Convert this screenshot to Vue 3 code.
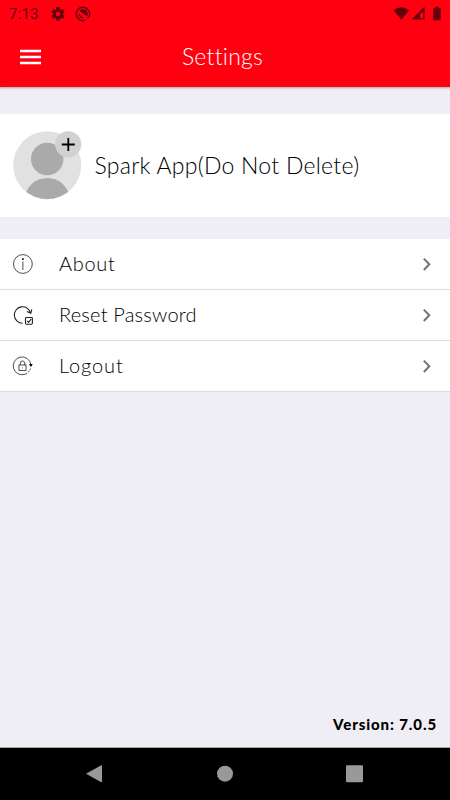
<template>
  <div class="screen">
    <header class="top">
      <div class="status">
        <span class="time">7:13</span>
        <svg class="gear" viewBox="0 0 24 24">
          <path d="M19.400 13c.1-.3.1-.7.1-1s0-.7-.1-1l2.100-1.700c.2-.1.2-.4.1-.6l-2-3.500c-.1-.2-.4-.3-.6-.2l-2.500 1c-.5-.4-1.100-.7-1.700-1L14.500 2.400c0-.2-.3-.4-.5-.4h-4c-.2 0-.5.2-.5.4L9.100 5c-.6.3-1.200.6-1.700 1L5 5c-.2-.1-.5 0-.6.2l-2 3.500c-.1.2-.1.5.1.6L4.600 11c0 .3-.1.7-.1 1s0 .7.1 1l-2.100 1.700c-.2.1-.2.4-.1.6l2 3.500c.1.2.4.3.6.2l2.500-1c.5.4 1.100.7 1.700 1l.4 2.600c0 .2.2.4.5.4h4c.2 0 .5-.2.5-.4l.4-2.600c.6-.3 1.200-.6 1.700-1l2.500 1c.2.1.5 0 .6-.2l2-3.500c.1-.2.1-.5-.1-.6zM12 15.500a3.500 3.500 0 1 1 0-7 3.500 3.500 0 0 1 0 7z" />
        </svg>
        <svg class="sync" viewBox="0 0 16 16">
          <path class="ring" d="M10.500 14.200A6.700 6.700 0 1 1 14.400 9.800L12.500 12.300" />
          <path d="M4.600 5A4.500 4.500 0 0 1 11.900 10.300z" />
          <path d="M3.500 7.600 8.700 12.300A4.400 4.400 0 0 1 3.500 7.600z" />
        </svg>
        <svg class="signals" viewBox="0 0 50 16">
          <path d="M1.500 4.200Q9.300-1.800 17.200 4.200L9.300 13.700z" />
          <path fill-rule="evenodd" d="M32.500 .5V13.500H19.500zM31.200 5 28 8.200v4h3.200z" />
          <path d="M41.200 2.300h2V.8h3.500v1.500h2v11.900h-7.500z" />
        </svg>
      </div>
      <div class="bar">
        <svg class="menu" viewBox="0 0 22 16">
          <path d="M0 2h21M0 8h21M0 14h21" />
        </svg>
        <h1>Settings</h1>
      </div>
    </header>

    <section class="profile">
      <svg class="avatar" viewBox="0 0 69 69">
        <defs>
          <clipPath id="face"><circle cx="34.200" cy="34.200" r="34" /></clipPath>
        </defs>
        <circle cx="34.200" cy="34.200" r="34" fill="#e1e1e1" />
        <g clip-path="url(#face)" fill="#aaa">
          <circle cx="34.200" cy="28" r="16.200" />
          <circle cx="34.200" cy="69.500" r="22.600" />
        </g>
        <circle cx="55.200" cy="13.300" r="13.100" fill="#d1d1d1" />
        <path d="M48.800 13.500h13M55.300 7v13" stroke="#000" stroke-width="1.800" />
      </svg>
      <span class="name">Spark App(Do Not Delete)</span>
    </section>

    <ul class="list">
      <li v-for="item in items" :key="item.icon" :class="item.icon">
        <svg v-if="item.icon === 'about'" class="icon" viewBox="0 0 22 22">
          <circle cx="10.900" cy="11" r="9.400" />
          <path d="M10.900 8.500v8.500" />
          <path class="heavy" d="M10.900 5.200v1.700" />
        </svg>
        <svg v-else-if="item.icon === 'reset'" class="icon" viewBox="0 0 22 22">
          <path class="mid" d="M10.600 19.200A8.200 8.200 0 1 1 18.500 9M14.900 7.500l3.900 1.700 1-3.900" />
          <rect class="mid" x="13.500" y="13.500" width="6.900" height="6.700" rx=".9" />
          <path class="mid" d="m15.200 16.900 1.400 1.500 2.600-3.400" />
        </svg>
        <svg v-else class="icon" viewBox="0 0 22 22">
          <path d="M13.200 19.200A8.900 8.900 0 1 1 18.900 9.500" />
          <path class="tip" d="M16.900 9h3.800l-1.700 2.900z" />
          <path d="M18.500 13.500A9 9 0 0 1 13.200 19.200" stroke-dasharray="2 1" />
          <rect x="7" y="10" width="7" height="5.500" />
          <path d="M8.300 10V8.200a2.200 2.200 0 0 1 4.400 0V10" />
          <path d="M10.500 12.500v.8" />
        </svg>
        <span class="label">{{ item.label }}</span>
        <svg class="chevron" viewBox="0 0 10 14">
          <path d="m1.800 1.600 5.500 5.700-5.500 5.700" />
        </svg>
      </li>
    </ul>

    <p class="version">Version: 7.0.5</p>

    <nav class="nav">
      <svg viewBox="0 0 450 52">
        <path d="M86 25.800 101.300 17.200Q102 17 102 18V33.500Q102 34.500 101.300 34.300z" />
        <circle cx="225" cy="25.700" r="8" />
        <rect x="346" y="17.300" width="17" height="17" rx="1" />
      </svg>
    </nav>
  </div>
</template>

<script setup>
const items = [
  { icon: 'about', label: 'About' },
  { icon: 'reset', label: 'Reset Password' },
  { icon: 'logout', label: 'Logout' },
];
</script>

<style>
body {
  margin: 0;
}
</style>

<style scoped>
.screen {
  display: flex;
  flex-direction: column;
  width: 450px;
  height: 800px;
  overflow: hidden;
  background: #efeef4;
  color: #000;
  font-family: Lato, sans-serif;
  font-weight: 300;
}

svg {
  display: block;
  flex: none;
}

.top {
  height: 87px;
  background: #ff0011;
  box-shadow: 0 1px 2px rgba(0, 0, 0, 0.3);
}

.status {
  display: flex;
  align-items: center;
  height: 27px;
  padding-left: 9px;
  color: #66000a;
  fill: #66000a;
}

.time {
  width: 41px;
  font: 400 15px Roboto, sans-serif;
  letter-spacing: 0.2px;
}

.gear {
  width: 16px;
  height: 16px;
}

.sync {
  width: 16px;
  height: 16px;
  margin-left: 9px;
}

.ring {
  fill: none;
  stroke: #66000a;
  stroke-width: 1.4;
}

.signals {
  width: 50px;
  height: 16px;
  margin: 0 8px 0 auto;
}

.bar {
  display: grid;
  grid-template-columns: 60px 1fr 65px;
  align-items: center;
  height: 60px;
}

.menu {
  width: 22px;
  height: 16px;
  margin-left: 20px;
  stroke: #fff;
  stroke-width: 2.4;
}

h1 {
  margin: 0;
  padding-bottom: 2px;
  color: #fff;
  font-size: 23px;
  font-weight: 300;
  line-height: 28px;
  letter-spacing: 0.25px;
  text-align: center;
}

.profile {
  display: flex;
  align-items: center;
  height: 103px;
  margin: 27px 0 22px;
  padding-left: 13px;
  background: #fff;
}

.avatar {
  width: 69px;
  height: 69px;
}

.name {
  margin-left: 12.5px;
  padding-bottom: 2px;
  font-size: 23px;
  letter-spacing: 0.27px;
}

.list {
  margin: 0;
  padding: 0;
  list-style: none;
}

li {
  display: flex;
  align-items: center;
  box-sizing: border-box;
  height: 51px;
  padding: 0 18px 0 12px;
  border-bottom: 1px solid #dcdcdc;
  background: #fff;
}

.icon {
  width: 22px;
  height: 22px;
  fill: none;
  stroke: #222;
  stroke-width: 0.8;
}

.mid {
  stroke-width: 1.1;
}

.heavy {
  stroke-width: 1.8;
}

.tip {
  fill: #000;
  stroke: none;
}

.label {
  flex: 1;
  margin-left: 25px;
  padding-bottom: 2px;
  font-size: 20px;
  letter-spacing: 0.7px;
}

.reset .label {
  letter-spacing: 0.2px;
}

.logout .label {
  letter-spacing: 0.9px;
}

.chevron {
  width: 10px;
  height: 14px;
  fill: none;
  stroke: #737373;
  stroke-width: 2;
}

.version {
  margin: auto 13px 14px 0;
  font-size: 15px;
  font-weight: 900;
  line-height: 18px;
  letter-spacing: 0.9px;
  text-align: right;
}

.nav {
  flex: none;
  height: 52px;
  border-top: 1px solid #aaa;
  background: #000;
  fill: #999;
}
</style>
